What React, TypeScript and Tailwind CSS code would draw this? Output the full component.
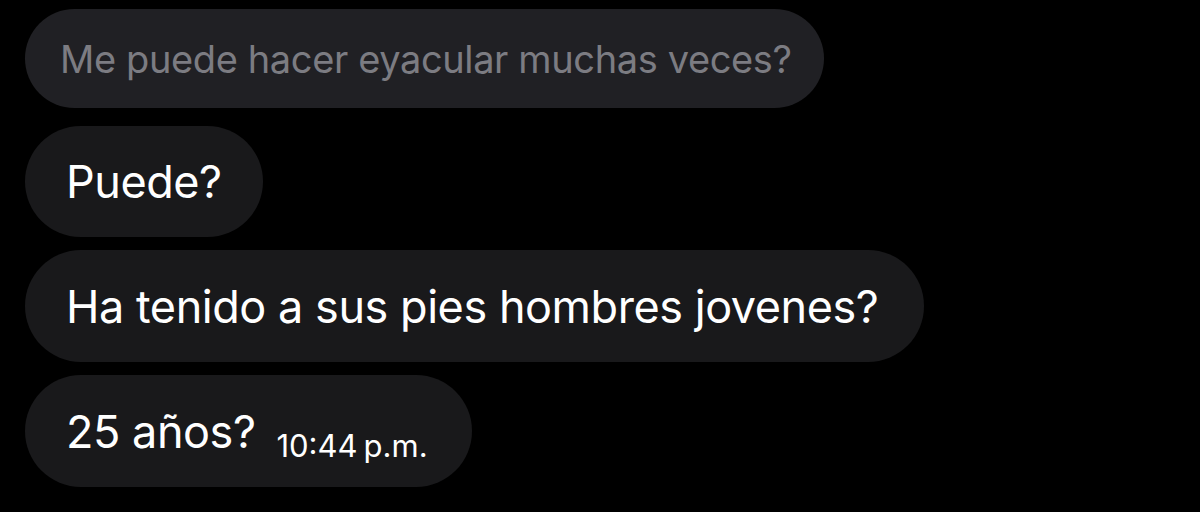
import React from "react";

export default function App() {
  const font = { fontFamily: "Inter, 'Noto Sans', sans-serif" } as const;
  return (
    <div
      className="w-[1200px] h-[512px] bg-black overflow-hidden flex flex-col items-start pl-[25px] pt-[9px]"
      style={font}
    >
      <div className="h-[99px] rounded-full bg-[#202024] flex items-center pl-[35px] pr-[32px]">
        <span className="text-[38px] text-[#7c7c82] tracking-[-0.01em] leading-none">
          Me puede hacer eyacular muchas veces?
        </span>
      </div>
      <div className="mt-[18px] h-[111px] rounded-full bg-[#19191b] flex items-center pl-[41px] pr-[41px]">
        <span className="text-[45px] text-white tracking-[-0.01em] leading-none">Puede?</span>
      </div>
      <div className="mt-[13px] h-[112px] rounded-full bg-[#19191b] flex items-center pl-[41px] pr-[46px]">
        <span className="text-[45px] text-white tracking-[-0.01em] leading-none">
          Ha tenido a sus pies hombres jovenes?
        </span>
      </div>
      <div className="mt-[13px] h-[112px] rounded-full bg-[#19191b] flex items-center pl-[41px] pr-[44px]">
        <div className="flex items-baseline">
          <span className="text-[45px] text-white tracking-[-0.01em] leading-none">25 años?</span>
          <span className="relative top-[9px] ml-[21px] text-[31px] text-white leading-none">
            10:44<span className="ml-[6px]">p.m.</span>
          </span>
        </div>
      </div>
    </div>
  );
}
